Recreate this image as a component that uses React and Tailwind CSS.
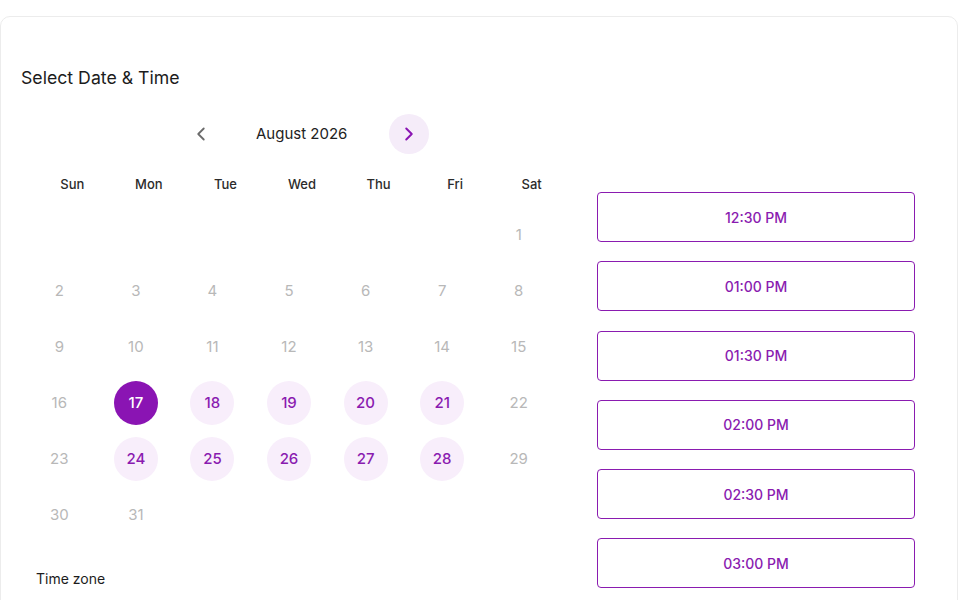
import { ChevronLeft, ChevronRight } from 'lucide-react'

const weekdays = ['Sun', 'Mon', 'Tue', 'Wed', 'Thu', 'Fri', 'Sat']
const available = [18, 19, 20, 21, 24, 25, 26, 27, 28]
const selected = 17
const slots = ['12:30 PM', '01:00 PM', '01:30 PM', '02:00 PM', '02:30 PM', '03:00 PM']

function DayCell({ day }) {
  if (!day) return <div className="h-14" />
  const isSel = day === selected
  const isAvail = available.includes(day)
  return (
    <div className="h-14 flex items-center justify-center">
      {isSel ? (
        <div className="w-11 h-11 rounded-full bg-[#8a14b3] text-white flex items-center justify-center text-[15px] font-medium">
          {day}
        </div>
      ) : isAvail ? (
        <div className="w-11 h-11 rounded-full bg-[#f8eefb] text-[#8a1bb0] flex items-center justify-center text-[15px] font-medium">
          {day}
        </div>
      ) : (
        <span className="text-[15px] text-[#b8b8b8]">{day}</span>
      )}
    </div>
  )
}

export default function App() {
  // August 2026 starts on Saturday
  const cells = [...Array(6).fill(null), ...Array.from({ length: 31 }, (_, i) => i + 1)]

  return (
    <div className="min-h-screen bg-white pt-4 font-['Inter',sans-serif]">
      <div className="w-[958px] h-[600px] border border-[#ececec] rounded-[10px] px-5 pt-[47px] overflow-hidden">
        <h2 className="text-[17.7px] leading-7 text-[#1c1c1c]">Select Date &amp; Time</h2>

        <div className="flex gap-[14px] mt-[22px]">
          {/* Calendar */}
          <div className="w-[562px]">
            <div className="flex items-center pl-[160px]">
              <button className="w-10 h-10 flex items-center justify-center text-[#6b6b6b]">
                <ChevronLeft size={22} strokeWidth={2} />
              </button>
              <span className="ml-[35px] mr-[42px] text-[15px] font-normal text-[#222]">August 2026</span>
              <button className="w-10 h-10 rounded-full bg-[#f5ecf9] flex items-center justify-center text-[#8a14b3]">
                <ChevronRight size={22} strokeWidth={2.2} />
              </button>
            </div>

            <div className="grid grid-cols-7 w-[536px] ml-[13px] mt-5">
              {weekdays.map((d) => (
                <div key={d} className="text-center text-[13px] leading-5 font-medium text-[#2b2b2b]">
                  {d}
                </div>
              ))}
            </div>

            <div className="grid grid-cols-7 w-[536px] mt-[13px]">
              {cells.map((d, i) => (
                <DayCell key={i} day={d} />
              ))}
            </div>

            <div className="mt-[26px] pl-[15px] text-[14px] leading-5 text-[#1c1c1c]">Time zone</div>
          </div>

          {/* Slots */}
          <div className="w-[318px] mt-[78px] flex flex-col gap-[19.25px]">
            {slots.map((s) => (
              <button
                key={s}
                className="h-[50px] w-full border border-[#8a1bb0] rounded-[4px] text-[14px] font-medium text-[#8a1bb0] flex items-center justify-center"
              >
                {s}
              </button>
            ))}
          </div>
        </div>
      </div>
    </div>
  )
}
